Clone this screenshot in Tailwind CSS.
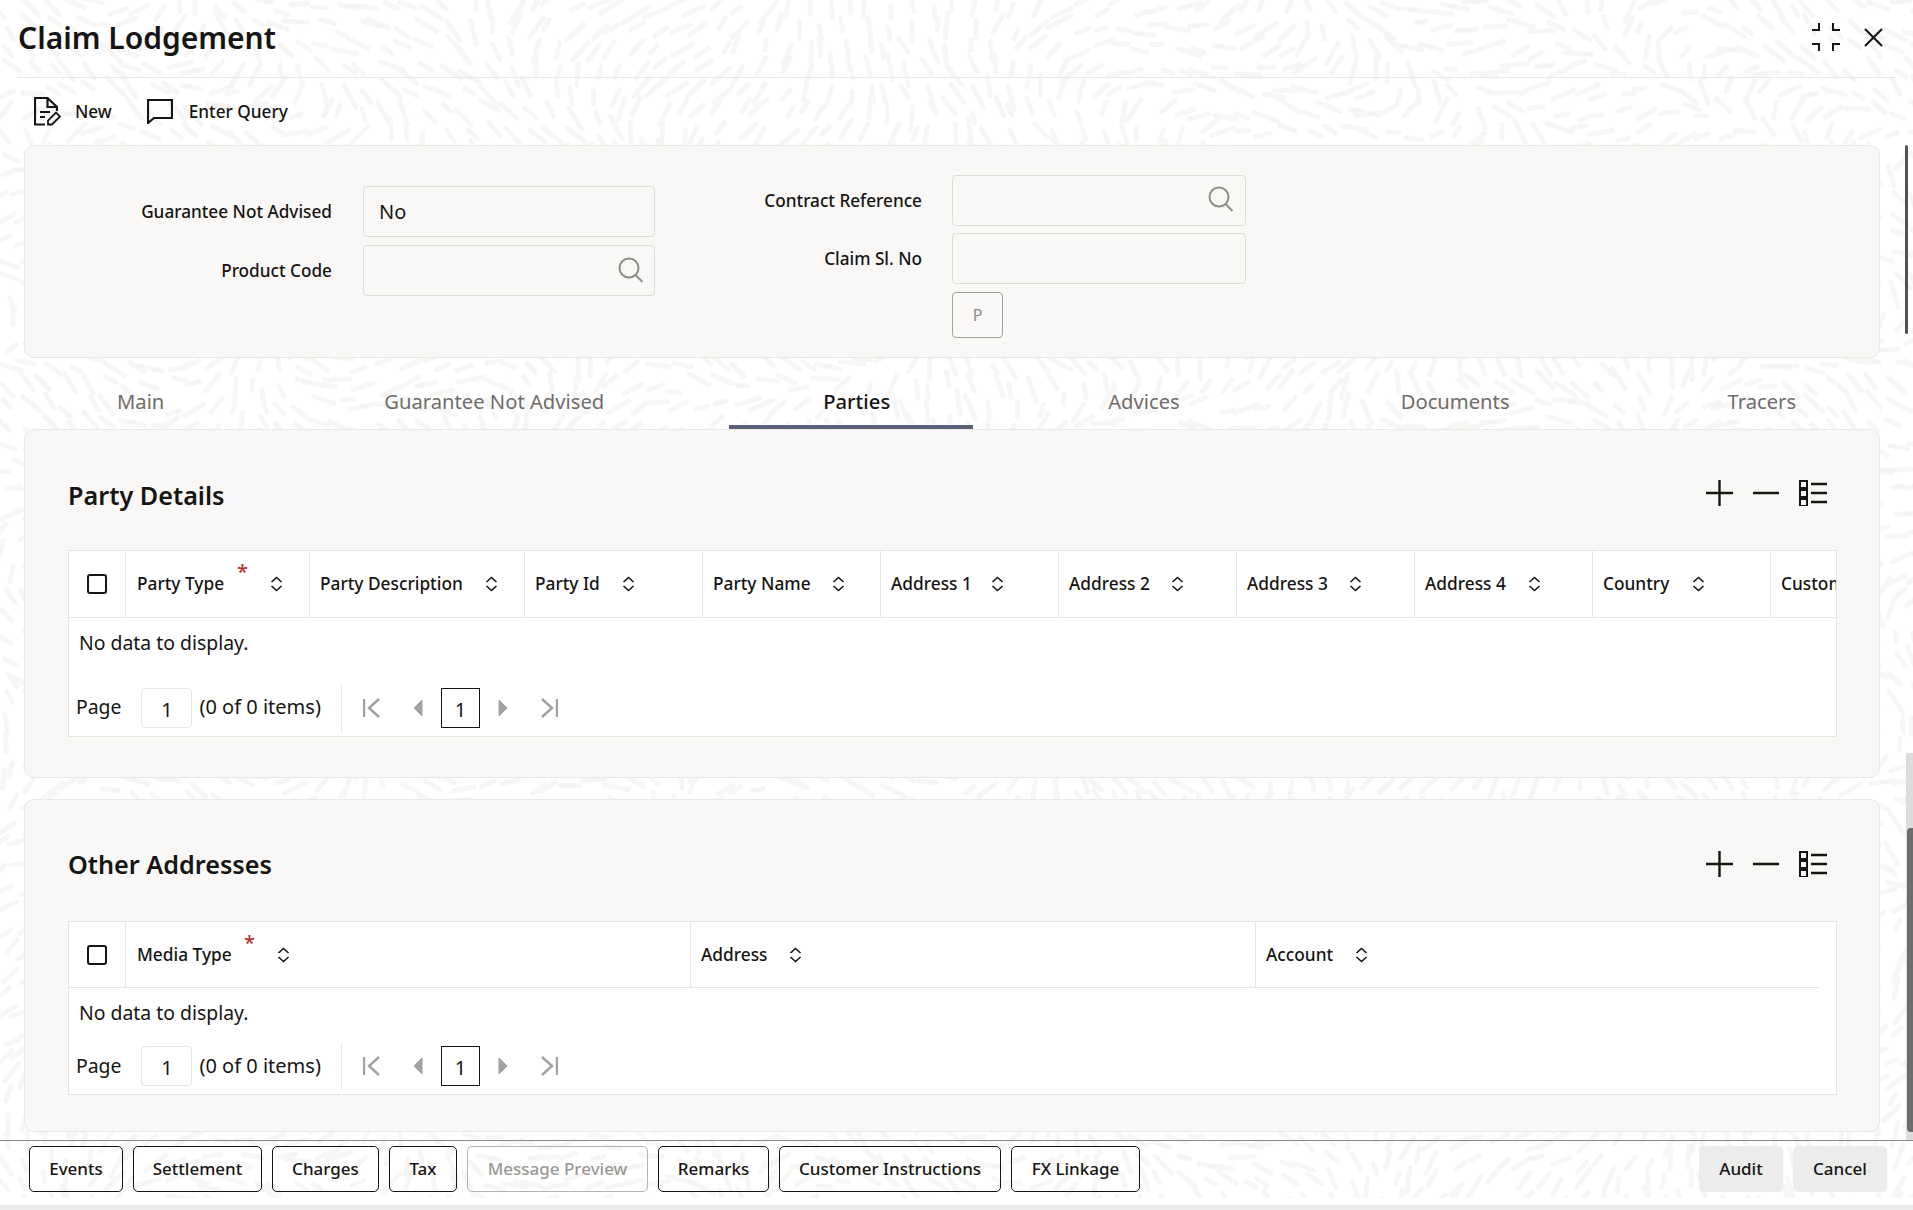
<!DOCTYPE html>
<html lang="en">
<head>
  <meta charset="UTF-8">
  <title>Claim Lodgement</title>
  <script src="https://cdn.jsdelivr.net/npm/@tailwindcss/browser@4"></script>
</head>
<body class="bg-white">
<div class="relative w-[1913px] h-[1210px] overflow-hidden bg-white font-['Noto_Sans',sans-serif] text-[#161513]">

  <!-- leaf background -->
  <svg id="leaves" class="absolute left-0 top-0" width="1913" height="1198" fill="none"></svg>

  <div class="relative flex flex-col h-full">
    <!-- header -->
    <div class="mx-[17px] h-[78px] shrink-0 flex items-center justify-between border-b border-[#e9e8e5]">
      <h1 class="ml-px text-[30px] leading-none font-semibold -mt-[1px]">Claim Lodgement</h1>
      <div class="flex items-center gap-[23px] mr-[13px] -mt-[3px]">
        <svg width="30" height="30" viewBox="0 0 30 30" fill="none" stroke="#161513" stroke-width="2"><path d="M8 1v7H1M22 1v7h7M1 22h7v7M29 22h-7v7"/></svg>
        <svg width="19" height="19" viewBox="0 0 19 19" fill="none" stroke="#161513" stroke-width="2.2"><path d="M1 1l17 17M18 1L1 18"/></svg>
      </div>
    </div>

    <!-- toolbar -->
    <div class="h-[67px] shrink-0 flex items-center pl-[34px] text-[17.2px] font-medium">
      <svg width="27" height="29" viewBox="0 0 27 29" fill="none" stroke="#161513" stroke-width="2.2"><path d="M11 27.500H1V1h12.500L23 10v4M13.500 1v9H23M6 15h10M6 20h5"/><path d="M14 27.500v-4l8-8 4 4-8 8z" stroke-width="1.8"/></svg>
      <span class="ml-[14px]">New</span>
      <svg class="ml-[35px]" width="26" height="25" viewBox="0 0 26 25" fill="none" stroke="#161513" stroke-width="2.2"><path d="M1 1h24v18H7l-6 5z"/></svg>
      <span class="ml-[16px]">Enter Query</span>
    </div>

    <!-- top form -->
    <div class="ml-[24px] w-[1856px] h-[213px] shrink-0 flex rounded-[10px] border border-[#e9e8e5] bg-[#f9f8f6] text-[17.2px] font-medium">
      <div class="w-[630px] pt-[40px] flex flex-col gap-[8px]">
        <div class="flex items-center">
          <label class="w-[308px] text-right">Guarantee Not Advised</label>
          <div class="ml-[31px] w-[293px] h-[51px] flex items-center pl-[15px] rounded border border-[#dfddda] text-[20px] font-normal">No</div>
        </div>
        <div class="flex items-center">
          <label class="w-[308px] text-right">Product Code</label>
          <div class="ml-[31px] w-[293px] h-[51px] flex items-center justify-end pr-[10px] rounded border border-[#dfddda]">
            <svg class="-mt-[2px]" width="26" height="26" viewBox="0 0 26 26" fill="none" stroke="#8f8d8a" stroke-width="2"><circle cx="11" cy="11" r="9.500"/><path d="M17.500 18l7 7"/></svg>
          </div>
        </div>
      </div>
      <div class="pt-[29px] flex flex-col gap-[7px]">
        <div class="flex items-center">
          <label class="w-[267px] text-right">Contract Reference</label>
          <div class="ml-[30px] w-[294px] h-[51px] flex items-center justify-end pr-[11px] rounded border border-[#dfddda]">
            <svg class="-mt-[3px]" width="26" height="26" viewBox="0 0 26 26" fill="none" stroke="#8f8d8a" stroke-width="2"><circle cx="11" cy="11" r="9.500"/><path d="M17.500 18l7 7"/></svg>
          </div>
        </div>
        <div class="flex items-center">
          <label class="w-[267px] text-right">Claim Sl. No</label>
          <div class="ml-[30px] w-[294px] h-[51px] rounded border border-[#dfddda]"></div>
        </div>
        <div class="ml-[297px] mt-px w-[51px] h-[46px] flex items-center justify-center rounded border border-[#a3a19e] text-[16px] font-normal text-[#8f8d8a]">P</div>
      </div>
    </div>

    <!-- tabs -->
    <div class="relative h-[71px] shrink-0 flex items-center text-[20.2px] text-[#6f6c69] pt-[16px]">
      <span class="ml-[117px]">Main</span>
      <span class="ml-[220px]">Guarantee Not Advised</span>
      <span class="ml-[219px] font-medium text-[#161513]">Parties</span>
      <span class="ml-[218px]">Advices</span>
      <span class="ml-[221px]">Documents</span>
      <span class="ml-[218px]">Tracers</span>
      <div class="absolute left-[729px] bottom-0 w-[244px] h-[4px] bg-[#5c6079]"></div>
    </div>

    <!-- party details -->
    <section class="ml-[24px] w-[1856px] h-[349px] shrink-0 rounded-[10px] border border-[#e9e8e5] bg-[#f9f8f6]">
      <div class="h-[120px] pl-[43px] pr-[52px] flex items-center justify-between">
        <h2 class="text-[25.2px] font-semibold mt-[11px]">Party Details</h2>
        <svg class="mt-[5px]" width="121" height="26" viewBox="0 0 121 26" fill="none" stroke="#161513" stroke-width="2.4"><path d="M0 13h27M13.500 0v26M47 13h26"/><path d="M94 1h7v7h-7zM94 10h7v7h-7zM94 19h7v7h-7z" stroke-width="2"/><path d="M105 4h16M105 13h16M105 22h16"/></svg>
      </div>
      <div class="ml-[43px] w-[1769px] h-[187px] bg-white border border-[#e6e5e2] overflow-hidden">
        <div class="flex h-[67px] border-b border-[#e6e5e2] text-[17.3px] font-medium">
          <div class="w-[57px] shrink-0 flex items-center justify-center border-r border-[#e6e5e2]">
            <div class="w-[20px] h-[20px] rounded-[3px] border-2 border-[#161513]"></div>
          </div>
          <div class="relative w-[184px] shrink-0 flex items-center pl-[11px] border-r border-[#e6e5e2]">
            <span>Party Type</span>
            <span class="absolute left-[111px] top-[6px] text-[#b3312a] text-[20px]">*</span>
            <svg class="ml-[46px]" width="13" height="16" viewBox="0 0 13 16" fill="none" stroke="#161513" stroke-width="1.6"><path d="M1.500 6L6.500 1.500 11.500 6M1.500 10l5 4.500 5-4.500"/></svg>
          </div>
          <div class="w-[215px] shrink-0 flex items-center pl-[10px] border-r border-[#e6e5e2]">
            <span>Party Description</span>
            <svg class="ml-[22px]" width="13" height="16" viewBox="0 0 13 16" fill="none" stroke="#161513" stroke-width="1.6"><path d="M1.500 6L6.500 1.500 11.500 6M1.500 10l5 4.500 5-4.500"/></svg>
          </div>
          <div class="w-[178px] shrink-0 flex items-center pl-[10px] border-r border-[#e6e5e2]">
            <span>Party Id</span>
            <svg class="ml-[22px]" width="13" height="16" viewBox="0 0 13 16" fill="none" stroke="#161513" stroke-width="1.6"><path d="M1.500 6L6.500 1.500 11.500 6M1.500 10l5 4.500 5-4.500"/></svg>
          </div>
          <div class="w-[178px] shrink-0 flex items-center pl-[10px] border-r border-[#e6e5e2]">
            <span>Party Name</span>
            <svg class="ml-[21px]" width="13" height="16" viewBox="0 0 13 16" fill="none" stroke="#161513" stroke-width="1.6"><path d="M1.500 6L6.500 1.500 11.500 6M1.500 10l5 4.500 5-4.500"/></svg>
          </div>
          <div class="w-[178px] shrink-0 flex items-center pl-[10px] border-r border-[#e6e5e2]">
            <span>Address 1</span>
            <svg class="ml-[19px]" width="13" height="16" viewBox="0 0 13 16" fill="none" stroke="#161513" stroke-width="1.6"><path d="M1.500 6L6.500 1.500 11.500 6M1.500 10l5 4.500 5-4.500"/></svg>
          </div>
          <div class="w-[178px] shrink-0 flex items-center pl-[10px] border-r border-[#e6e5e2]">
            <span>Address 2</span>
            <svg class="ml-[21px]" width="13" height="16" viewBox="0 0 13 16" fill="none" stroke="#161513" stroke-width="1.6"><path d="M1.500 6L6.500 1.500 11.500 6M1.500 10l5 4.500 5-4.500"/></svg>
          </div>
          <div class="w-[178px] shrink-0 flex items-center pl-[10px] border-r border-[#e6e5e2]">
            <span>Address 3</span>
            <svg class="ml-[21px]" width="13" height="16" viewBox="0 0 13 16" fill="none" stroke="#161513" stroke-width="1.6"><path d="M1.500 6L6.500 1.500 11.500 6M1.500 10l5 4.500 5-4.500"/></svg>
          </div>
          <div class="w-[178px] shrink-0 flex items-center pl-[10px] border-r border-[#e6e5e2]">
            <span>Address 4</span>
            <svg class="ml-[22px]" width="13" height="16" viewBox="0 0 13 16" fill="none" stroke="#161513" stroke-width="1.6"><path d="M1.500 6L6.500 1.500 11.500 6M1.500 10l5 4.500 5-4.500"/></svg>
          </div>
          <div class="w-[178px] shrink-0 flex items-center pl-[10px] border-r border-[#e6e5e2]">
            <span>Country</span>
            <svg class="ml-[23px]" width="13" height="16" viewBox="0 0 13 16" fill="none" stroke="#161513" stroke-width="1.6"><path d="M1.500 6L6.500 1.500 11.500 6M1.500 10l5 4.500 5-4.500"/></svg>
          </div>
          <div class="w-[178px] shrink-0 flex items-center pl-[10px]"><span>Customer</span></div>
        </div>
        <p class="pl-[10px] pt-[10px] text-[19.4px] leading-[30px]">No data to display.</p>
        <div class="flex items-center h-[48px] mt-[26px] text-[20px]">
          <span class="ml-[7px] text-[19.4px] -mt-[3px]">Page</span>
          <div class="ml-[20px] w-[51px] h-[40px] flex items-center justify-center rounded border border-[#e6e5e2] pt-[3px]">1</div>
          <span class="ml-[7px] -mt-[3px]">(0 of 0 items)</span>
          <div class="ml-[20px] w-px h-[47px] bg-[#e6e5e2]"></div>
          <svg class="ml-[21px]" width="60" height="24" viewBox="0 0 60 24" fill="#a3a19e" stroke="#a3a19e"><path d="M1 3v18M16 3L6 12l10 9" fill="none" stroke-width="2.400"/><path d="M59 4l-8 8 8 8z"/></svg>
          <div class="ml-[18px] w-[39px] h-[40px] flex items-center justify-center border border-[#161513] pt-[3px]">1</div>
          <svg class="ml-[18px]" width="60" height="24" viewBox="0 0 60 24" fill="#a3a19e" stroke="#a3a19e"><path d="M1 4l8 8-8 8z"/><path d="M44 3l10 9-10 9M59 3v18" fill="none" stroke-width="2.400"/></svg>
        </div>
      </div>
    </section>

    <!-- other addresses -->
    <section class="ml-[24px] mt-[21px] w-[1856px] h-[333px] shrink-0 rounded-[10px] border border-[#e9e8e5] bg-[#f9f8f6]">
      <div class="h-[121px] pl-[43px] pr-[52px] flex items-center justify-between">
        <h2 class="text-[25.2px] font-semibold mt-[9px]">Other Addresses</h2>
        <svg class="mt-[6px]" width="121" height="26" viewBox="0 0 121 26" fill="none" stroke="#161513" stroke-width="2.4"><path d="M0 13h27M13.500 0v26M47 13h26"/><path d="M94 1h7v7h-7zM94 10h7v7h-7zM94 19h7v7h-7z" stroke-width="2"/><path d="M105 4h16M105 13h16M105 22h16"/></svg>
      </div>
      <div class="ml-[43px] w-[1769px] h-[174px] bg-white border border-[#e6e5e2] overflow-hidden">
        <div class="flex w-[1751px] h-[66px] border-b border-[#e6e5e2] text-[17.3px] font-medium">
          <div class="w-[57px] shrink-0 flex items-center justify-center border-r border-[#e6e5e2]">
            <div class="w-[20px] h-[20px] rounded-[3px] border-2 border-[#161513]"></div>
          </div>
          <div class="relative w-[565px] shrink-0 flex items-center pl-[11px] border-r border-[#e6e5e2]">
            <span>Media Type</span>
            <span class="absolute left-[118px] top-[6px] text-[#b3312a] text-[20px]">*</span>
            <svg class="ml-[45px]" width="13" height="16" viewBox="0 0 13 16" fill="none" stroke="#161513" stroke-width="1.6"><path d="M1.500 6L6.500 1.500 11.500 6M1.500 10l5 4.500 5-4.500"/></svg>
          </div>
          <div class="w-[565px] shrink-0 flex items-center pl-[10px] border-r border-[#e6e5e2]">
            <span>Address</span>
            <svg class="ml-[22px]" width="13" height="16" viewBox="0 0 13 16" fill="none" stroke="#161513" stroke-width="1.6"><path d="M1.500 6L6.500 1.500 11.500 6M1.500 10l5 4.500 5-4.500"/></svg>
          </div>
          <div class="flex-1 flex items-center pl-[10px]">
            <span>Account</span>
            <svg class="ml-[22px]" width="13" height="16" viewBox="0 0 13 16" fill="none" stroke="#161513" stroke-width="1.6"><path d="M1.500 6L6.500 1.500 11.500 6M1.500 10l5 4.500 5-4.500"/></svg>
          </div>
        </div>
        <p class="pl-[10px] pt-[10px] text-[19.4px] leading-[30px]">No data to display.</p>
        <div class="flex items-center h-[48px] mt-[14px] text-[20px]">
          <span class="ml-[7px] text-[19.4px] -mt-[1px]">Page</span>
          <div class="ml-[20px] w-[51px] h-[40px] flex items-center justify-center rounded border border-[#e6e5e2] pt-[3px]">1</div>
          <span class="ml-[7px] -mt-[1px]">(0 of 0 items)</span>
          <div class="ml-[20px] w-px h-[47px] bg-[#e6e5e2]"></div>
          <svg class="ml-[21px]" width="60" height="24" viewBox="0 0 60 24" fill="#a3a19e" stroke="#a3a19e"><path d="M1 3v18M16 3L6 12l10 9" fill="none" stroke-width="2.400"/><path d="M59 4l-8 8 8 8z"/></svg>
          <div class="ml-[18px] w-[39px] h-[40px] flex items-center justify-center border border-[#161513] pt-[3px]">1</div>
          <svg class="ml-[18px]" width="60" height="24" viewBox="0 0 60 24" fill="#a3a19e" stroke="#a3a19e"><path d="M1 4l8 8-8 8z"/><path d="M44 3l10 9-10 9M59 3v18" fill="none" stroke-width="2.400"/></svg>
        </div>
      </div>
    </section>

    <!-- footer -->
    <footer class="mt-[8px] h-[58px] shrink-0 border-t border-[#8a8886] flex items-start pt-[5px] pl-[29px] pr-[26px] gap-[10px] text-[17px] font-medium">
      <button class="w-[94px] h-[46px] rounded-[5px] border border-[#161513]">Events</button>
      <button class="w-[129px] h-[46px] rounded-[5px] border border-[#161513]">Settlement</button>
      <button class="w-[107px] h-[46px] rounded-[5px] border border-[#161513]">Charges</button>
      <button class="w-[68px] h-[46px] rounded-[5px] border border-[#161513]">Tax</button>
      <button class="w-[181px] h-[46px] rounded-[5px] border border-[#b5b3b0] text-[#9a9895]">Message Preview</button>
      <button class="w-[111px] h-[46px] rounded-[5px] border border-[#161513]">Remarks</button>
      <button class="w-[222px] h-[46px] rounded-[5px] border border-[#161513]">Customer Instructions</button>
      <button class="w-[129px] h-[46px] rounded-[5px] border border-[#161513]">FX Linkage</button>
      <button class="ml-auto w-[84px] h-[46px] rounded-[5px] bg-[#ececeb]">Audit</button>
      <button class="w-[94px] h-[46px] rounded-[5px] bg-[#ececeb]">Cancel</button>
    </footer>

    <div class="h-[7px] shrink-0 bg-white"></div>
    <div class="h-[5px] shrink-0 bg-[#ebebeb]"></div>
  </div>

  <!-- scrollbars -->
  <div class="absolute left-[1905px] top-[145px] w-[3px] h-[189px] rounded-sm bg-[#55534f]"></div>
  <div class="absolute left-[1906px] top-[753px] w-[7px] h-[387px] bg-[#dcdcdc]"></div>
  <div class="absolute left-[1907px] top-[828px] w-[6px] h-[304px] rounded-l-sm bg-[#6d6d6d]"></div>
</div>

<script>
  // short leaf strokes following a slow flow field
  let seed = 7;
  function rnd() {
    seed = (seed * 16807) % 2147483647;
    return seed / 2147483647;
  }
  let d = "";
  for (let y = 0; y < 1210; y += 21) {
    for (let x = 0; x < 1920; x += 21) {
      const px = x + rnd() * 14, py = y + rnd() * 14;
      const a = 1.6 + 1.4 * Math.sin(px / 95 + Math.cos(py / 75) * 1.6) + 0.9 * Math.cos(py / 60 - px / 140) + rnd() * 0.5;
      const len = 5 + rnd() * 8;
      const dx = Math.cos(a) * len, dy = Math.sin(a) * len;
      d += "M" + (px - dx).toFixed(1) + " " + (py - dy).toFixed(1) + "L" + (px + dx).toFixed(1) + " " + (py + dy).toFixed(1);
    }
  }
  const p = document.createElementNS("http://www.w3.org/2000/svg", "path");
  p.setAttribute("d", d);
  p.setAttribute("stroke", "#f7f6f5");
  p.setAttribute("stroke-width", "5");
  p.setAttribute("stroke-linecap", "round");
  document.getElementById("leaves").appendChild(p);
</script>
</body>
</html>
